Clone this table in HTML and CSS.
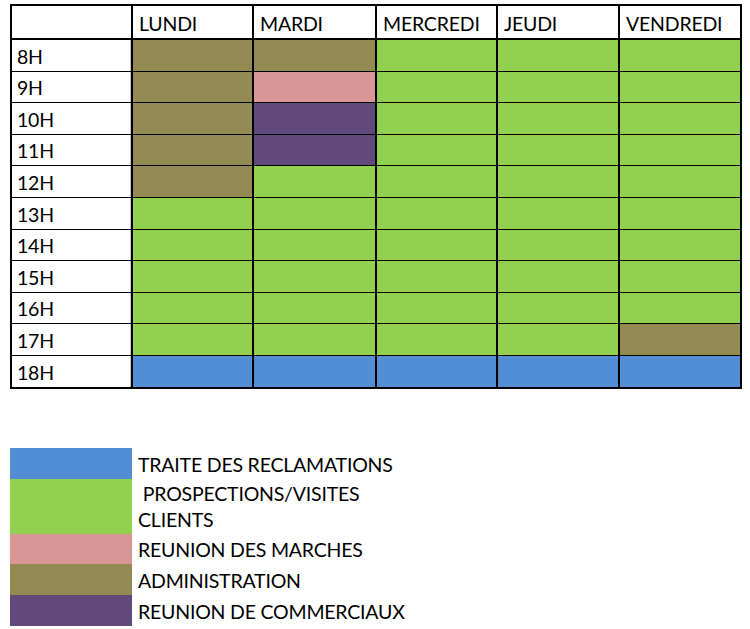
FILE: index.html
```html
<!DOCTYPE html>
<html lang="fr">
<head>
<meta charset="utf-8">
<title>Planning</title>
<link rel="stylesheet" href="styles.css">
</head>
<body>
<div class="page">
  <div class="schedule">
    <div class="cell head"></div>
    <div class="cell head day">LUNDI</div>
    <div class="cell head day">MARDI</div>
    <div class="cell head day">MERCREDI</div>
    <div class="cell head day">JEUDI</div>
    <div class="cell head day">VENDREDI</div>

    <div class="cell hour">8H</div>
    <div class="cell admin"></div><div class="cell admin"></div><div class="cell visit"></div><div class="cell visit"></div><div class="cell visit"></div>

    <div class="cell hour">9H</div>
    <div class="cell admin"></div><div class="cell market"></div><div class="cell visit"></div><div class="cell visit"></div><div class="cell visit"></div>

    <div class="cell hour">10H</div>
    <div class="cell admin"></div><div class="cell sales"></div><div class="cell visit"></div><div class="cell visit"></div><div class="cell visit"></div>

    <div class="cell hour">11H</div>
    <div class="cell admin"></div><div class="cell sales"></div><div class="cell visit"></div><div class="cell visit"></div><div class="cell visit"></div>

    <div class="cell hour">12H</div>
    <div class="cell admin"></div><div class="cell visit"></div><div class="cell visit"></div><div class="cell visit"></div><div class="cell visit"></div>

    <div class="cell hour">13H</div>
    <div class="cell visit"></div><div class="cell visit"></div><div class="cell visit"></div><div class="cell visit"></div><div class="cell visit"></div>

    <div class="cell hour">14H</div>
    <div class="cell visit"></div><div class="cell visit"></div><div class="cell visit"></div><div class="cell visit"></div><div class="cell visit"></div>

    <div class="cell hour">15H</div>
    <div class="cell visit"></div><div class="cell visit"></div><div class="cell visit"></div><div class="cell visit"></div><div class="cell visit"></div>

    <div class="cell hour">16H</div>
    <div class="cell visit"></div><div class="cell visit"></div><div class="cell visit"></div><div class="cell visit"></div><div class="cell visit"></div>

    <div class="cell hour">17H</div>
    <div class="cell visit"></div><div class="cell visit"></div><div class="cell visit"></div><div class="cell visit"></div><div class="cell admin"></div>

    <div class="cell hour">18H</div>
    <div class="cell claims"></div><div class="cell claims"></div><div class="cell claims"></div><div class="cell claims"></div><div class="cell claims"></div>
  </div>

  <div class="legend">
    <div class="swatch claims"></div>
    <div class="label">TRAITE DES RECLAMATIONS</div>
    <div class="swatch visit"></div>
    <div class="label">&nbsp;PROSPECTIONS/VISITES<br>CLIENTS</div>
    <div class="swatch market"></div>
    <div class="label">REUNION DES MARCHES</div>
    <div class="swatch admin"></div>
    <div class="label">ADMINISTRATION</div>
    <div class="swatch sales"></div>
    <div class="label">REUNION DE COMMERCIAUX</div>
  </div>
</div>
</body>
</html>
```

FILE: styles.css
```css
html, body {
  margin: 0;
  padding: 0;
  background: #ffffff;
}

body {
  font-family: Lato, "Open Sans", "Liberation Sans", sans-serif;
  font-size: 19.5px;
  letter-spacing: -0.2px;
  color: #000000;
}

.page {
  padding: 4px 0 0 10px;
}

.schedule {
  display: inline-grid;
  grid-template-columns: 119px 119px 121px 119px 120px 120px;
  grid-template-rows: 33px repeat(11, 30.6px);
  column-gap: 2px;
  row-gap: 1px;
  background: #000000;
  border: 2px solid #000000;
}

.cell {
  display: flex;
  align-items: flex-end;
  box-sizing: border-box;
  line-height: 26px;
  padding: 0 0 1px 0;
  background: #ffffff;
  white-space: nowrap;
}

.head {
  border-bottom: 1px solid #000000;
}

.day {
  padding-left: 6px;
}

.hour {
  padding-left: 5px;
  box-shadow: inset -1px 0 0 #c6c6c6;
}

.admin { background: #948a54; }
.market { background: #da9694; }
.sales { background: #604a7b; }
.visit { background: #92d050; }
.claims { background: #538dd5; }

.legend {
  display: grid;
  grid-template-columns: 122px auto;
  grid-template-rows: 31px 55px 30px 31px 31px;
  margin-top: 59.5px;
}

.label {
  display: flex;
  align-items: flex-end;
  line-height: 26px;
  padding: 0 0 1px 6px;
  white-space: nowrap;
}
```
